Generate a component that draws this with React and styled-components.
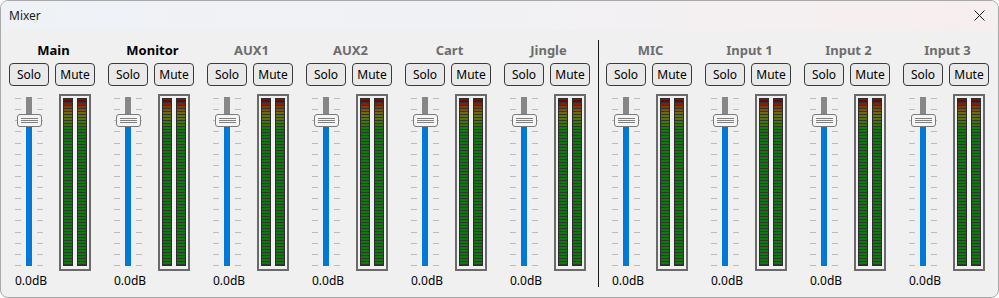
import React from 'react';
import styled, { createGlobalStyle } from 'styled-components';

const GlobalStyle = createGlobalStyle`
  html, body {
    margin: 0;
    padding: 0;
    background: #ffffff;
  }

  body {
    font-family: 'Noto Sans', 'Open Sans', sans-serif;
  }
`;

const Window = styled.div`
  box-sizing: border-box;
  width: 999px;
  height: 298px;
  border: 1px solid #a9a9a9;
  border-radius: 8px;
  overflow: hidden;
  background: #f0f0f0;
  display: flex;
  flex-direction: column;
`;

const TitleBar = styled.div`
  height: 29px;
  flex-shrink: 0;
  display: flex;
  align-items: center;
  justify-content: space-between;
  padding: 0 4px 0 8px;
  background: linear-gradient(90deg, #eef2f6 0%, #f1f1f4 50%, #f7eeee 100%);
  font-size: 12px;
  color: #1a1a1a;
`;

const CloseButton = styled.div`
  width: 30px;
  height: 29px;
  display: flex;
  align-items: center;
  justify-content: center;
`;

const Body = styled.div`
  display: flex;
  padding: 10px 0 0 3px;
`;

const Channel = styled.div`
  width: 99px;
  flex-shrink: 0;
  display: flex;
  flex-direction: column;
`;

const Heading = styled.div`
  height: 20px;
  line-height: 20px;
  text-align: center;
  font-size: 13px;
  font-weight: 700;
  color: ${(p) => (p.$active ? '#000000' : '#6d6d6d')};
`;

const ButtonRow = styled.div`
  display: flex;
  gap: 6px;
  margin: 3px 0 0 5px;
`;

const Button = styled.button`
  box-sizing: border-box;
  width: 40px;
  height: 23px;
  padding: 0;
  border: 1px solid #3a3a3a;
  border-radius: 4px;
  background: #e9e9e9;
  font-family: 'Noto Sans', 'Open Sans', sans-serif;
  font-size: 12px;
  color: #000000;
`;

const Strip = styled.div`
  display: flex;
  align-items: flex-start;
  margin: 8px 0 0 11px;
`;

const Fader = styled.div`
  position: relative;
  width: 28px;
  height: 170px;
  margin-top: 3px;
`;

const Tick = styled.div`
  position: absolute;
  width: 6px;
  height: 1px;
  background: #bcbcbc;
  left: ${(p) => (p.$side === 'left' ? '0' : '22px')};
`;

const Track = styled.div`
  position: absolute;
  left: 11px;
  top: 0;
  width: 6px;
  height: 169px;
  background: linear-gradient(180deg, #878787 0, #878787 23px, #0078d7 23px);
`;

const Thumb = styled.div`
  position: absolute;
  left: 2px;
  top: 17px;
  box-sizing: border-box;
  width: 25px;
  height: 13px;
  border: 1px solid #7a7a7a;
  border-radius: 3px;
  background: #f5f5f5;
  display: flex;
  flex-direction: column;
  justify-content: center;
  align-items: center;
  gap: 1px;
`;

const Grip = styled.div`
  width: 17px;
  height: 1px;
  background: #808080;
`;

const Meter = styled.div`
  box-sizing: border-box;
  width: 32px;
  height: 177px;
  margin-left: 16px;
  border: 2px solid #6a6a6a;
  padding: 2px;
  display: flex;
  gap: 4px;
`;

const Bar = styled.div`
  box-sizing: border-box;
  width: 10px;
  height: 168px;
  border: 1px solid #2c2c2c;
  background: #333333;
  display: flex;
  flex-direction: column;
  gap: 1px;
  padding-top: 1px;
`;

const Segment = styled.div`
  height: 2px;
  flex-shrink: 0;
  background: ${(p) => p.$color};
`;

const Level = styled.div`
  width: 28px;
  margin: 2px 0 0 11px;
  line-height: 16px;
  text-align: center;
  font-size: 12px;
  color: #000000;
`;

const Divider = styled.div`
  width: 3px;
  height: 247px;
  flex-shrink: 0;
  border-left: 1px solid #1a1a1a;
  box-sizing: border-box;
`;

const SEGMENT_COLORS = [
  '#7a0000',
  '#852000',
  '#833c00',
  '#7a5400',
  '#726a00',
  '#667200',
  '#547600',
  '#427800',
  '#2e7a00',
  '#1c7a04',
];

const segments = Array.from({ length: 55 }, (_, i) => SEGMENT_COLORS[i] || '#0b790b');
const ticks = Array.from({ length: 16 }, (_, i) => Math.round(1 + i * 11.13));

function MeterBar() {
  return (
    <Bar>
      {segments.map((c, i) => (
        <Segment key={i} $color={c} />
      ))}
    </Bar>
  );
}

function ChannelStrip({ name, active }) {
  return (
    <Channel>
      <Heading $active={active}>{name}</Heading>
      <ButtonRow>
        <Button>Solo</Button>
        <Button>Mute</Button>
      </ButtonRow>
      <Strip>
        <Fader>
          {ticks.map((t) => (
            <React.Fragment key={t}>
              <Tick $side='left' style={{ top: t }} />
              <Tick $side='right' style={{ top: t }} />
            </React.Fragment>
          ))}
          <Track />
          <Thumb>
            <Grip />
            <Grip />
            <Grip />
          </Thumb>
        </Fader>
        <Meter>
          <MeterBar />
          <MeterBar />
        </Meter>
      </Strip>
      <Level>0.0dB</Level>
    </Channel>
  );
}

const outputs = [
  { name: 'Main', active: true },
  { name: 'Monitor', active: true },
  { name: 'AUX1' },
  { name: 'AUX2' },
  { name: 'Cart' },
  { name: 'Jingle' },
];

const inputs = [{ name: 'MIC' }, { name: 'Input 1' }, { name: 'Input 2' }, { name: 'Input 3' }];

export default function App() {
  return (
    <>
      <GlobalStyle />
      <Window>
        <TitleBar>
          <span>Mixer</span>
          <CloseButton>
            <svg width='11' height='11' viewBox='0 0 11 11'>
              <path d='M0.5 0.5 L10.5 10.5 M10.5 0.5 L0.5 10.5' stroke='#1a1a1a' strokeWidth='1' />
            </svg>
          </CloseButton>
        </TitleBar>
        <Body>
          {outputs.map((ch) => (
            <ChannelStrip key={ch.name} {...ch} />
          ))}
          <Divider />
          {inputs.map((ch) => (
            <ChannelStrip key={ch.name} {...ch} />
          ))}
        </Body>
      </Window>
    </>
  );
}
